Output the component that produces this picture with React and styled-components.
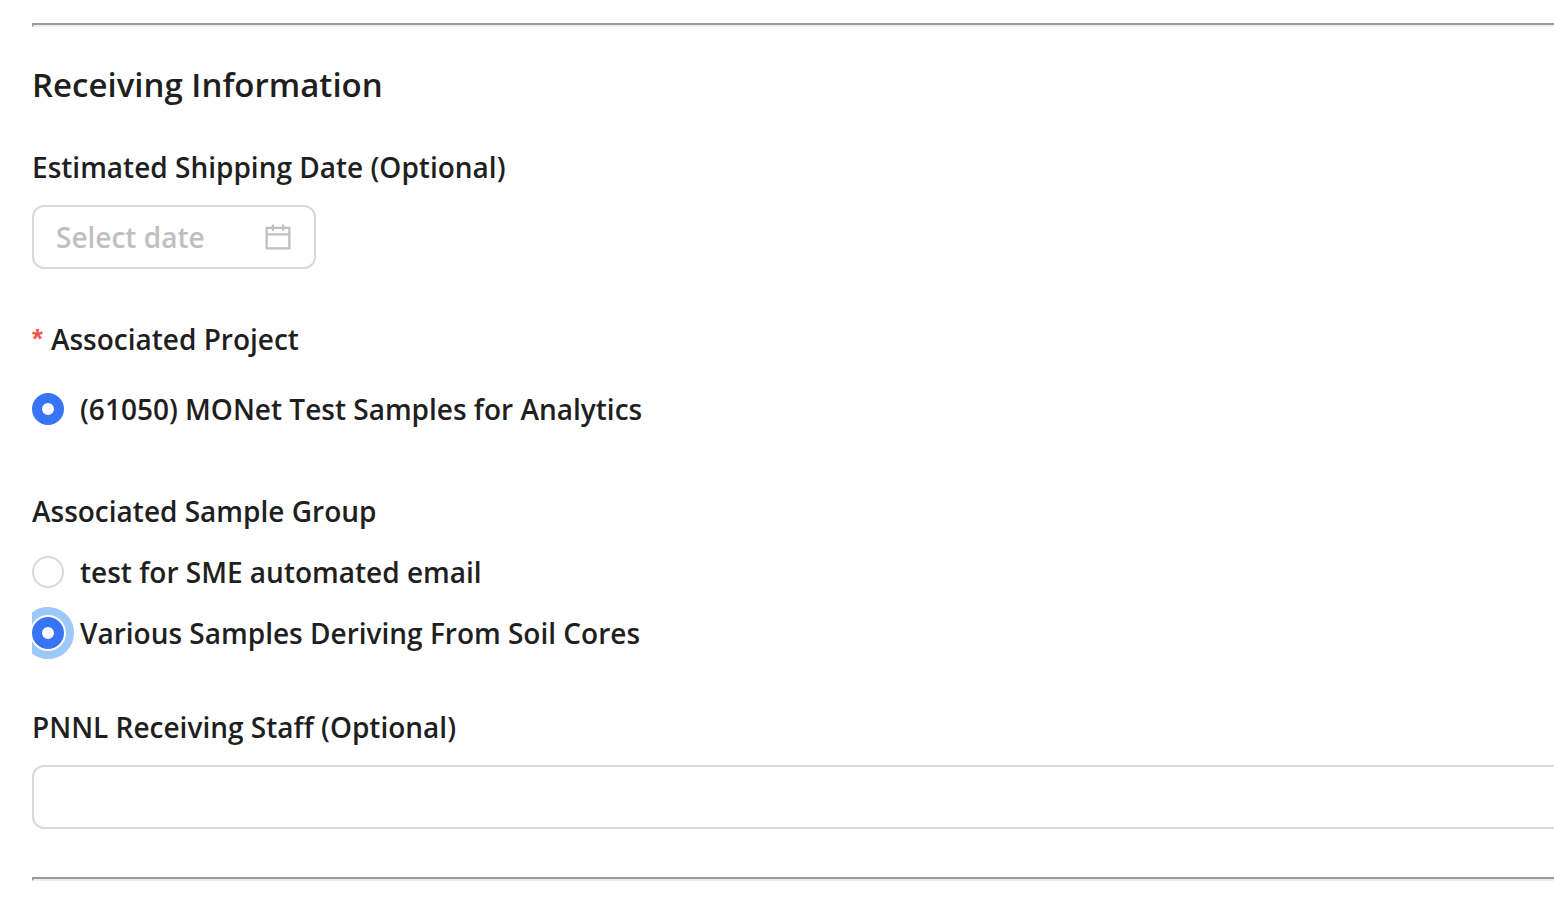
import React, { useState } from "react";
import styled, { createGlobalStyle } from "styled-components";

const GlobalStyle = createGlobalStyle`
  * { box-sizing: border-box; }
  body {
    margin: 0;
    background: #fff;
    color: #1f1f1f;
    font: 600 28px/44px "Open Sans", sans-serif;
  }
`;

const Page = styled.main`
  padding: 23px 0 17px 32px;
`;

const Divider = styled.hr`
  margin: 0;
  height: 4px;
  border: 2px solid;
  border-color: #9a9a9a transparent #eee #9a9a9a;
  border-right: 0;
`;

const Form = styled.form`
  display: flex;
  flex-direction: column;
  padding: 32px 0 48px;
`;

const Title = styled.h2`
  margin: 0 0 34px;
  font-size: 33px;
  font-weight: 600;
  line-height: 52px;
`;

const Field = styled.div`
  display: flex;
  flex-direction: column;
  align-items: flex-start;
  gap: 16px;
`;

const Group = styled.fieldset`
  min-width: 0;
  margin: ${(p) => p.$gapAbove}px 0 0;
  padding: 0;
  border: 0;
`;

const Legend = styled.legend`
  display: flex;
  padding: 0;
`;

const Required = styled.span`
  margin-right: 8px;
  color: #f5554f;
  font: 600 28px/44px "Liberation Sans", sans-serif;
`;

const Options = styled.div`
  display: flex;
  flex-direction: column;
  gap: 17px;
  margin-top: ${(p) => p.$offset}px;
  overflow-x: clip;
`;

const Option = styled.label`
  display: flex;
  align-items: center;
  gap: 16px;
  cursor: pointer;
`;

const Radio = styled.input`
  appearance: none;
  flex: none;
  width: 32px;
  height: 32px;
  margin: 0;
  border: 2px solid #d9d9d9;
  border-radius: 50%;
  background: #fff;

  &:checked {
    border: 10px solid #3875f6;
  }

  &:focus {
    outline: 8px solid #9dc8fa;
    outline-offset: 2px;
  }
`;

const DateBox = styled.div`
  display: flex;
  align-items: center;
  width: 284px;
  height: 64px;
  padding: 0 20px 0 22px;
  border: 2px solid #d9d9d9;
  border-radius: 12px;
`;

const DateInput = styled.input`
  flex: 1;
  min-width: 0;
  padding: 0;
  border: 0;
  outline: 0;
  background: none;
  color: inherit;
  font: inherit;

  &::placeholder {
    color: #bfbfbf;
    opacity: 1;
  }
`;

const CalendarIcon = styled.svg`
  flex: none;
  width: 32px;
  height: 32px;
  fill: #bfbfbf;
`;

const StaffField = styled(Field)`
  margin-top: 50px;
`;

const StaffInput = styled.input`
  width: 100%;
  height: 64px;
  padding: 0 22px;
  border: 2px solid #d9d9d9;
  border-right: 0;
  border-radius: 12px 0 0 12px;
  background: #fff;
  color: inherit;
  font: inherit;
`;

const SAMPLE_GROUPS = [
  "test for SME automated email",
  "Various Samples Deriving From Soil Cores",
];

export default function App() {
  const [group, setGroup] = useState(SAMPLE_GROUPS[1]);

  return (
    <>
      <GlobalStyle />
      <Page>
        <Divider />
        <Form>
          <Title>Receiving Information</Title>

          <Field>
            <label htmlFor="ship-date">Estimated Shipping Date (Optional)</label>
            <DateBox>
              <DateInput id="ship-date" type="text" placeholder="Select date" />
              <CalendarIcon viewBox="0 0 1024 1024" aria-hidden="true">
                <path d="M880 184H712v-64c0-4.4-3.6-8-8-8h-56c-4.4 0-8 3.6-8 8v64H384v-64c0-4.4-3.6-8-8-8h-56c-4.4 0-8 3.6-8 8v64H144c-17.7 0-32 14.3-32 32v664c0 17.7 14.3 32 32 32h736c17.7 0 32-14.3 32-32V216c0-17.7-14.3-32-32-32zm-40 656H184V460h656v380zM184 392V256h128v48c0 4.4 3.6 8 8 8h56c4.4 0 8-3.6 8-8v-48h256v48c0 4.4 3.6 8 8 8h56c4.4 0 8-3.6 8-8v-48h128v136H184z" />
              </CalendarIcon>
            </DateBox>
          </Field>

          <Group $gapAbove={48}>
            <Legend>
              <Required>*</Required>
              Associated Project
            </Legend>
            <Options $offset={26}>
              <Option>
                <Radio type="radio" name="project" defaultChecked />
                (61050) MONet Test Samples for Analytics
              </Option>
            </Options>
          </Group>

          <Group $gapAbove={58}>
            <Legend>Associated Sample Group</Legend>
            <Options $offset={17}>
              {SAMPLE_GROUPS.map((name) => (
                <Option key={name}>
                  <Radio
                    type="radio"
                    name="sample-group"
                    checked={group === name}
                    onChange={() => setGroup(name)}
                    autoFocus={name === SAMPLE_GROUPS[1]}
                  />
                  {name}
                </Option>
              ))}
            </Options>
          </Group>

          <StaffField>
            <label htmlFor="staff">PNNL Receiving Staff (Optional)</label>
            <StaffInput id="staff" type="text" />
          </StaffField>
        </Form>
        <Divider />
      </Page>
    </>
  );
}
